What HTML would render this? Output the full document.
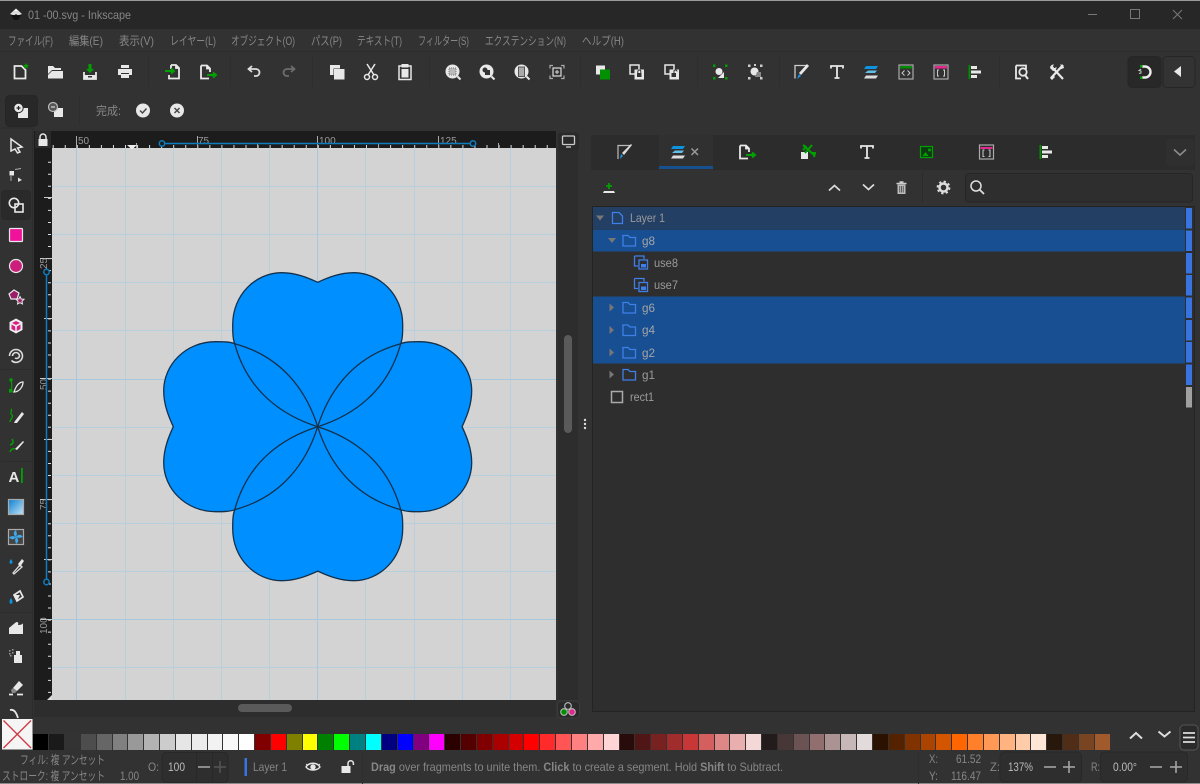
<!DOCTYPE html>
<html><head><meta charset="utf-8"><title>01 -00.svg - Inkscape</title>
<style>
html,body{margin:0;padding:0;background:#323232;width:1200px;height:784px;overflow:hidden}
svg{position:absolute;left:0;top:0}
text{font-family:"Liberation Sans","Noto Sans CJK JP",sans-serif;font-size:12px;fill:#868686}
#pal{position:absolute;left:33.3px;top:734px;height:16px;display:flex}
#pal i{display:block;width:15.85px;height:16px;box-sizing:border-box;border-right:1px solid #333}
.w{fill:#e8e8e8}.s{fill:none;stroke:#e8e8e8;stroke-width:1.8}.g{fill:#00a000}.gs{fill:none;stroke:#00a000;stroke-width:1.6}
</style></head><body>
<svg width="1200" height="784" viewBox="0 0 1200 784">
<defs>
<path id="h" d="M0 0C35-11 70-35 83-83C85-88 85-95 85-102C85-132 62-154 36-154C22-154 10-149 0-144.4C-10-149-22-154-36-154C-62-154-85-132-85-102C-85-95-85-88-83-83C-70-35-35-11 0 0Z"/>
<linearGradient id="gr" x1="0" y1="0" x2="1" y2="1"><stop offset="0" stop-color="#0a7fd0"/><stop offset="1" stop-color="#c5e4f5"/></linearGradient>
</defs>
<!-- chrome -->
<rect width="1200" height="784" fill="#323232"/>
<rect y="0" width="1200" height="29" fill="#272727"/>
<rect y="0" width="1200" height="1" fill="#9a9a9a"/>
<rect y="51" width="1200" height="1" fill="#2b2b2b"/>
<rect y="783" width="1200" height="1" fill="#8a8a8a"/>
<!-- title -->
<g transform="translate(16,14)"><path d="M-6 0L0-5.5 6 0 2 1.5 0 0-2 1.5Z" fill="#ddd"/><path d="M-5 1L5 1 2 6-2 6Z" fill="#111"/><path d="M-2-3L0-5 2-3Z" fill="#fff"/></g>
<text x="28" y="19" textLength="103" lengthAdjust="spacingAndGlyphs">01 -00.svg - Inkscape</text>
<path d="M1088 14.5H1097" stroke="#777" stroke-width="1"/>
<rect x="1130.5" y="9.5" width="9" height="9" fill="none" stroke="#777"/>
<path d="M1173 10L1182 19M1182 10L1173 19" stroke="#777"/>
<!-- menu -->
<g>
<text x="8" y="45" textLength="45" lengthAdjust="spacingAndGlyphs">ファイル(F)</text>
<text x="69" y="45" textLength="34" lengthAdjust="spacingAndGlyphs">編集(E)</text>
<text x="119" y="45" textLength="35" lengthAdjust="spacingAndGlyphs">表示(V)</text>
<text x="170" y="45" textLength="46" lengthAdjust="spacingAndGlyphs">レイヤー(L)</text>
<text x="231" y="45" textLength="64" lengthAdjust="spacingAndGlyphs">オブジェクト(O)</text>
<text x="311" y="45" textLength="31" lengthAdjust="spacingAndGlyphs">パス(P)</text>
<text x="357" y="45" textLength="45" lengthAdjust="spacingAndGlyphs">テキスト(T)</text>
<text x="418" y="45" textLength="51" lengthAdjust="spacingAndGlyphs">フィルター(S)</text>
<text x="485" y="45" textLength="81" lengthAdjust="spacingAndGlyphs">エクステンション(N)</text>
<text x="582" y="45" textLength="42" lengthAdjust="spacingAndGlyphs">ヘルプ(H)</text>
</g>
<!-- toolbar separators -->
<path d="M148.5 56V87M230.5 56V87M312.5 56V87M429.5 56V87M580.5 56V87M697.5 56V87M779.5 56V87M999.5 56V87M79.5 95V125" stroke="#2e2e2e"/>
<!-- toolbar icons -->
<g transform="translate(20,72)"><path d="M-5.5-6H1.5L5.5-2V6.5H-5.5Z" class="s"/><path d="M6-9L7-7 9-7 7.5-5.5 8-3.500 6-4.500 4-3.500 4.500-5.500 3-7 5-7Z" class="g"/></g>
<g transform="translate(55,72)"><path d="M-7-6H-2L0-4H6V-2H-3L-7 2Z" class="w"/><path d="M-7 6.5V3L-3-1H8V6.5Z" class="w"/></g>
<g transform="translate(90,72)"><path d="M-1.5-8H1.5V-3H4L0 1-4-3H-1.5Z" class="g"/><path d="M-6 0V7H6V0" class="s"/><rect x="-6" y="3" width="12" height="4" class="w"/><rect x="-2" y="4" width="4" height="1.5" fill="#333"/></g>
<g transform="translate(125,72)"><rect x="-4" y="-7" width="8" height="3" class="w"/><path d="M-7-3H7V3H4V1H-4V3H-7Z" class="w"/><rect x="-4" y="2" width="8" height="4" class="w"/></g>
<g transform="translate(173,72)"><path d="M-2-7H3L6-4V6.5H-4V3M-2-7V-3M3-7V-4H6" class="s"/><path d="M-8-1H1M-2-3.500L1-1-2 1.500" stroke="#00a000" stroke-width="2" fill="none"/></g>
<g transform="translate(207,72)"><path d="M-6-6.5H0L3-3.500V0M-6-6.5V6.5H2M0-6.5V-3.500H3" class="s"/><path d="M0 3H9M6 .5L9 3 6 5.5" stroke="#00a000" stroke-width="2" fill="none"/></g>
<g transform="translate(254,72)"><path d="M-5-3H2A3.500 3.500 0 0 1 2 4H0M-2-6L-5.5-3-2 0" fill="none" stroke="#dedede" stroke-width="1.8"/></g>
<g transform="translate(289,72)"><path d="M5-3H-2A3.500 3.500 0 0 0-2 4H0M2-6L5.5-3 2 0" fill="none" stroke="#6d6d6d" stroke-width="1.8"/></g>
<g transform="translate(337,72)"><rect x="-7" y="-7" width="10" height="10" class="w"/><rect x="-3.5" y="-3.5" width="11" height="11" fill="#333"/><rect x="-3" y="-3" width="10.5" height="10.5" class="w"/></g>
<g transform="translate(371,72)"><circle cx="-4" cy="5" r="2.5" fill="none" stroke="#e8e8e8" stroke-width="1.5"/><circle cx="4" cy="5" r="2.5" fill="none" stroke="#e8e8e8" stroke-width="1.5"/><path d="M-3 3L4-8M3 3L-4-8" fill="none" stroke="#e8e8e8" stroke-width="1.5"/></g>
<g transform="translate(405,72)"><rect x="-6" y="-6" width="12" height="13.5" fill="none" stroke="#e8e8e8" stroke-width="1.5"/><rect x="-3.5" y="-8" width="7" height="3.5" class="w"/><rect x="-3.5" y="-3" width="7" height="8.5" class="w"/></g>
<g transform="translate(453,72)"><circle cx="-.5" cy="-.5" r="7" class="w"/><rect x="-4" y="-4" width="7" height="7" fill="#bbb" stroke="#777" stroke-dasharray="1 1"/><path d="M4.5 4.5L7.5 7.5" stroke="#e8e8e8" stroke-width="2"/></g>
<g transform="translate(487,72)"><circle cx="-.5" cy="-.5" r="7" class="w"/><circle cx="-2" cy="-2" r="2.5" fill="#333"/><rect x="-2" y="-2" width="5" height="5" fill="#333"/><path d="M4.5 4.5L7.5 7.5" stroke="#e8e8e8" stroke-width="2"/></g>
<g transform="translate(522,72)"><circle cx="-.5" cy="-.5" r="7" class="w"/><rect x="-3.5" y="-5" width="6" height="9.5" fill="#aaa" stroke="#555"/><path d="M4.5 4.5L7.5 7.5" stroke="#e8e8e8" stroke-width="2"/></g>
<g transform="translate(557,72)" fill="none" stroke="#aaa"><path d="M-7-3.500V-6.5H-4M4-6.5H7V-3.500M7 3.500V6.5H4M-4 6.5H-7V3.500" stroke-width="1.2"/><rect x="-4" y="-4" width="8" height="8" stroke="#ddd" stroke-width="1.2"/><path d="M-2 0H2M0-2V2" stroke="#ddd"/></g>
<g transform="translate(603,72)"><rect x="-7" y="-6.5" width="9" height="9" class="w"/><rect x="-3" y="-2.500" width="10" height="10" fill="#009000"/></g>
<g transform="translate(637,72)"><rect x="-7" y="-7" width="9" height="9" fill="none" stroke="#e8e8e8" stroke-width="1.5"/><rect x="-2.500" y="-2.500" width="9.5" height="10" fill="#e8e8e8"/><rect x="0" y="1" width="4.5" height="4" fill="#333"/><path d="M.8 1V-.5A1.5 1.5 0 0 1 3.800-.5V1" stroke="#333" fill="none"/></g>
<g transform="translate(672,72)"><rect x="-7" y="-7" width="9" height="9" fill="none" stroke="#e8e8e8" stroke-width="1.5"/><rect x="-2.500" y="-2.500" width="9.5" height="10" fill="#e8e8e8"/><rect x="-.5" y="1" width="4.5" height="4" fill="#333"/><path d="M2 1V-.5A1.5 1.5 0 0 1 5-.5" stroke="#333" fill="none"/></g>
<g transform="translate(720,72)"><path d="M-7-7.5h2.500v2.500h-2.500zM5-7.5h2.500v2.500h-2.500zM-7 5h2.500v2.500h-2.500zM5 5h2.500v2.500h-2.500z" class="g"/><circle cx="-1" cy="-.5" r="3.500" class="w"/><path d="M-2 6L4 6 4 0Z" class="w"/></g>
<g transform="translate(755,72)"><path d="M-7-7.5h2.500v2.500h-2.500zM5-7.5h2.500v2.500h-2.500zM-7 5h2.500v2.500h-2.500zM5 5h2.500v2.500h-2.500zM-1-8h2v2h-2z" fill="#ccc"/><circle cx="-.5" cy="-.5" r="4" class="w"/><path d="M2 0H6V5H0Z" fill="#888"/></g>
<g transform="translate(801,72)"><path d="M-6 6.5V-6.5H6" fill="none" stroke="#ccc" stroke-width="1.3"/><path d="M6-8L8-6 0 3-2 1Z" class="w"/><path d="M-2 2L0 4-4 7Z" fill="#1b9ae8"/></g>
<path transform="translate(837,72)" d="M-6-3.500V-6H6V-3.500M0-6V6M-2.500 6H2.500" fill="none" stroke="#e8e8e8" stroke-width="1.8"/>
<g transform="translate(871,72)"><path d="M-5-6H7L5-3H-7Z" fill="#0e93e0"/><path d="M-3-1.500H6L4 1H-6Z" fill="#62bde8"/><path d="M-5 3.500H7L5 6.5H-7Z" fill="#ddd"/></g>
<g transform="translate(906,72)"><rect x="-7" y="-7" width="14" height="14" fill="none" stroke="#aaa" stroke-width="1.2"/><rect x="-6" y="-6" width="12" height="2.5" fill="#008a00"/><path d="M-1.5-1.5L-4 1-1.5 3.500M1.5-1.5L4 1 1.5 3.500" fill="none" stroke="#ccc"/></g>
<g transform="translate(941,72)"><rect x="-7" y="-7" width="14" height="14" fill="none" stroke="#aaa" stroke-width="1.2"/><rect x="-6" y="-6" width="12" height="2.5" fill="#e6268f"/><path d="M-2-2H-3.500V4H-2M2-2H3.500V4H2" fill="none" stroke="#ccc"/></g>
<g transform="translate(975,72)"><rect x="-6.5" y="-7" width="1.8" height="14" fill="#009000"/><rect x="-4" y="-6" width="6" height="3" class="w"/><rect x="-4" y="-1.5" width="10" height="3" class="w"/><rect x="-4" y="3" width="6" height="3" class="w"/></g>
<g transform="translate(1022,72)"><path d="M-6-6.5H4V-3M-6-6.5V6.5H-1" class="s"/><circle cx="1" cy="0" r="3.700" class="s"/><path d="M3 3L6 7" stroke="#e8e8e8" stroke-width="2"/></g>
<g transform="translate(1057,72)"><path d="M-6-6L6 7M6-7L-6 6" stroke="#e8e8e8" stroke-width="2.2"/><path d="M-7-4A3.500 3.500 0 0 1-3-7.5L-4.500-5-3-3.500-.5-5A3.500 3.500 0 0 1-4-1ZM7-4A3.500 3.500 0 0 0 3-7.5L5-5 2-2ZM-7 6L-4 3-2 5-5 8Z" class="w"/></g>
<rect x="1128" y="56.5" width="33" height="31" rx="4" fill="#282828" stroke="#262626"/>
<rect x="1163" y="56.5" width="32" height="31" rx="4" fill="#333" stroke="#262626"/>
<g transform="translate(1145,72)"><path d="M-5-5.5H-2A5.5 5.5 0 0 1-2 5.5H-5" fill="none" stroke="#eee" stroke-width="2.4" transform="translate(2,0)"/><rect x="-5" y="-7" width="2.5" height="2.5" fill="#00a000"/><rect x="-5" y="4.5" width="2.5" height="2.5" fill="#00a000"/><path d="M-4-3L-6-1.5-4-1-4 1-6 1.5" stroke="#ccc" fill="none"/></g>
<path d="M1174 71.5L1181 66V77Z" fill="#e8e8e8"/>
<!-- row2 -->
<rect x="5.5" y="95.5" width="32" height="31" rx="4" fill="#282828" stroke="#262626"/>
<g transform="translate(20,110)"><rect x="-2" y="-2" width="10" height="10" class="w"/><circle cx="-1.5" cy="-2" r="4.700" class="w" stroke="#282828"/><path d="M-3.500-2H.5M-1.5-4V0" stroke="#222" stroke-width="1.2"/></g>
<g transform="translate(56,110)"><rect x="-2" y="-2" width="9" height="9" class="w"/><circle cx="-3" cy="-3" r="4.5" fill="#555" stroke="#bbb" stroke-width="1.2"/><path d="M-5-3H-1" stroke="#ddd" stroke-width="1.2"/></g>
<text x="96" y="115" textLength="25" lengthAdjust="spacingAndGlyphs">完成:</text>
<circle cx="143" cy="110.5" r="7" fill="#e8e8e8"/><path d="M140 110.5L142.500 113 146.500 108.5" fill="none" stroke="#444" stroke-width="1.4"/>
<circle cx="177" cy="110.5" r="7" fill="#e8e8e8"/><path d="M174.500 108L179.500 113M179.500 108L174.500 113" stroke="#444" stroke-width="1.4"/>
<!-- left toolbar -->
<rect x="1.5" y="190.5" width="29" height="29" rx="4" fill="#2a2a2a" stroke="#282828"/>
<path d="M1 128H32M32.500 128V718M1 369.5H32M1 461.5H32M1 612.500H32" stroke="#2c2c2c"/>
<g transform="translate(16,146)"><path d="M-5-7L6 1 1.5 2 4 6 1.5 7 -1 3-5 5Z" fill="#333" stroke="#e8e8e8" stroke-width="1.5"/></g>
<g transform="translate(16,175)"><rect x="-6.5" y="-4" width="4.5" height="4.5" class="w"/><path d="M-1-5.5L5-6.5" stroke="#aaa" fill="none"/><path d="M-5 1V6" stroke="#aaa"/><path d="M2 2.500L6 5 2 7Z" fill="#ddd"/></g>
<g transform="translate(16,205)"><circle cx="-2" cy="-2" r="4.700" fill="none" stroke="#e8e8e8" stroke-width="1.6"/><rect x="-1" y="-1" width="8" height="8" fill="none" stroke="#e8e8e8" stroke-width="1.6"/></g>
<g transform="translate(16,235)"><rect x="-6.5" y="-6.5" width="13" height="13" rx="1" fill="#f0129b" stroke="#e8e8e8" stroke-width="1.2"/></g>
<circle cx="16" cy="266" r="6.5" fill="#cc1f7c" stroke="#e8e8e8" stroke-width="1.2"/>
<g transform="translate(16,296)"><path d="M-7-2L-2-6 3-3 1 3-5 3Z" fill="#9c1e6a" stroke="#e8e8e8" stroke-width="1.2"/><path d="M4 .5L5.200 3 8 3.300 6 5.200 6.5 8 4 6.700 1.5 8 2 5.200 0 3.300 2.800 3Z" fill="#9c1e6a" stroke="#e8e8e8"/></g>
<g transform="translate(16,326)"><path d="M0-7.5L6.5-4V4L0 7.5-6.5 4V-4Z" fill="#eee"/><path d="M0-5L4-3 0-1-4-3ZM-4.500-1.5L-.8 .5V5L-4.500 3ZM4.500-1.5L.8 .5V5L4.500 3Z" fill="#d81c82"/></g>
<g transform="translate(16,356)" fill="none" stroke="#ddd" stroke-width="1.6"><path d="M-6.5 0A6.5 6.5 0 0 1 6.5 0 6.5 6.5 0 0 1-4.500 4.500"/><path d="M-3.500 0A3.500 3.500 0 0 1 3.500 0 3 3 0 0 1-1 2"/></g>
<g transform="translate(16,386)"><path d="M-5-6C-4-2-4 0-5 5" fill="none" stroke="#00a000" stroke-width="1.2"/><circle cx="-5" cy="-6" r="1.7" class="g"/><rect x="-7" y="3" width="3.500" height="3.500" class="g"/><path d="M-2 6C0 0 3-4 7-4C7 1 3 6-2 6Z" fill="none" stroke="#e8e8e8" stroke-width="1.3"/></g>
<g transform="translate(16,416)"><path d="M-5-7C-3-5-7-3-4-1C-2 1-6 3-6 6" fill="none" stroke="#00a000" stroke-width="1.3"/><path d="M-1 5L6-4 8-2 1 7-2 7Z" class="w"/></g>
<g transform="translate(16,446)"><path d="M-4-7C-2-4-3-2-6-1M-6 6C-5 3-3 2-1 3" fill="none" stroke="#00a000" stroke-width="1.5"/><path d="M-1 3L7-5 8-4 1 4Z" class="w"/></g>
<text x="8.5" y="482" style="font-size:15px;font-weight:bold;fill:#e8e8e8">A</text><rect x="21" y="468" width="1.8" height="15" fill="#00a000"/>
<g transform="translate(16,507)"><rect x="-7.5" y="-7.5" width="15" height="15" fill="url(#gr)" stroke="#aaa" stroke-width="1.2"/></g>
<g transform="translate(16,537)"><rect x="-7.5" y="-7.5" width="15" height="15" fill="#444" stroke="#aaa" stroke-width="1.2"/><path d="M0 0C-3-2-3-5 0-7L1-3ZM0 0C2-3 5-3 7 0L3 1ZM0 0C3 2 3 5 0 7L-1 3ZM0 0C-2 3-5 3-7 0L-3-1Z" fill="#3ea9e8"/></g>
<g transform="translate(16,567)"><path d="M-5-8C-3-5-3-4-5-3-7-4-7-5-5-8Z" fill="#0e93e0"/><path d="M-3 6L4-2 6 0-2 7Z" fill="none" stroke="#ddd" stroke-width="1.3"/><path d="M2-3L6-8 8-6 4 0Z" class="w"/></g>
<g transform="translate(16,597)"><path d="M-2-2L4-6 7 0 1 4Z" fill="none" stroke="#e8e8e8" stroke-width="1.7"/><path d="M-2-2L4-2 1 4Z" class="w"/><path d="M-5 1C-3 4-3 6-5 7-7 6-7 4-5 1Z" fill="#0e93e0"/></g>
<g transform="translate(16,627)"><path d="M-7 7V1L-1-4C1-6 3-5 2-2 5-2 7-3 7-4V7Z" class="w"/></g>
<g transform="translate(16,656)"><rect x="-2" y="-1" width="8" height="8" class="w"/><rect x="0" y="-5" width="4" height="4" class="w"/><path d="M-7-6h1.5v1.5h-1.5zM-4-7h1.5v1.5h-1.5zM-7-3h1.5v1.5h-1.5zM-4-4h1.5v1.5h-1.5zM-6-1h1.5v1.5h-1.5z" fill="#999"/></g>
<g transform="translate(16,687)"><path d="M-3 1L3-6 7-2 1 4Z" class="w"/><path d="M-5 3L-3 1 1 4-1 6H-4Z" fill="#888"/><path d="M-7 7.5H-3M1 7.5H7" class="s"/></g>
<path d="M10 710C14 709 16 712 18 718" fill="none" stroke="#e8e8e8" stroke-width="1.8"/>
<!-- canvas rulers -->
<rect x="34" y="131" width="522" height="17" fill="#1c1c1c"/>
<rect x="34" y="131" width="18" height="569" fill="#1c1c1c"/>
<rect x="35" y="131" width="16" height="17" fill="#2a2a2a"/>
<g transform="translate(43,140)"><rect x="-4.500" y="-1" width="9" height="7" fill="#e8e8e8"/><path d="M-3-1V-3A3 3 0 0 1 3-3V-1" fill="none" stroke="#e8e8e8" stroke-width="1.5"/></g>
<!-- canvas -->
<rect x="52" y="148" width="504" height="552" fill="#d3d3d3"/>
<g stroke="#b8cfde" stroke-width="1" fill="none">
<path d="M125.5 148V700M173.5 148V700M221.5 148V700M269.5 148V700M365.5 148V700M414.5 148V700M462.5 148V700M510.5 148V700"/>
<path d="M52 186.5H556M52 234.5H556M52 282.500H556M52 330.500H556M52 427.500H556M52 475.500H556M52 523.500H556M52 571.500H556M52 667.500H556"/>
</g>
<g stroke="#a8c8de" stroke-width="1" fill="none"><path d="M76.5 148V700M317.5 148V700M52 379.5H556M52 619.5H556"/></g>
<!-- clover -->
<g transform="translate(317.7,426.7)">
<use href="#h" fill="#008fff"/><use href="#h" fill="#008fff" transform="rotate(90)"/><use href="#h" fill="#008fff" transform="rotate(180)"/><use href="#h" fill="#008fff" transform="rotate(270)"/>
<g fill="none" stroke="#14304a" stroke-width="1.3"><use href="#h"/><use href="#h" transform="rotate(90)"/><use href="#h" transform="rotate(180)"/><use href="#h" transform="rotate(270)"/></g>
</g>
<!-- ruler ticks -->
<line x1="52.7" x2="556" y1="146.5" y2="146.5" stroke="#ddd" stroke-width="3" stroke-dasharray="1 11.05"/>
<line x1="49.5" x2="49.5" y1="161.7" y2="700" stroke="#ddd" stroke-width="3" stroke-dasharray="1 11.05"/>
<path d="M76.5 136V148M197.5 136V148M317.5 136V148M438.5 136V148M136.5 143V148M257.5 143V148M378.5 143V148M498.5 143V148" stroke="#aaa"/>
<path d="M40 258.5H52M40 378.5H52M40 499.5H52M40 619.5H52M44 197.5H52M44 318.5H52M44 439.5H52M44 559.5H52" stroke="#ccc"/>
<text x="78" y="144" style="font-size:10px;fill:#999">50</text><text x="198" y="144" style="font-size:10px;fill:#999">75</text><text x="319" y="144" style="font-size:10px;fill:#999">100</text><text x="440" y="144" style="font-size:10px;fill:#999">125</text>
<text transform="translate(47,269) rotate(-90)" style="font-size:10px;fill:#999">25</text>
<text transform="translate(47,390) rotate(-90)" style="font-size:10px;fill:#999">50</text>
<text transform="translate(47,510) rotate(-90)" style="font-size:10px;fill:#999">75</text>
<text transform="translate(47,634) rotate(-90)" style="font-size:10px;fill:#999">100</text>
<path d="M127 145H137L132 149.5Z" fill="#eee"/>
<path d="M162 143.5H473" stroke="#0f7cc0" stroke-width="1.5"/><circle cx="162" cy="143.5" r="2.700" fill="#1c1c1c" stroke="#0f7cc0" stroke-width="1.5"/><circle cx="473" cy="143.5" r="2.700" fill="#1c1c1c" stroke="#0f7cc0" stroke-width="1.5"/>
<path d="M46.5 272V582" stroke="#0f7cc0" stroke-width="1.5"/><circle cx="46.5" cy="272" r="2.700" fill="#1c1c1c" stroke="#0f7cc0" stroke-width="1.5"/><circle cx="46.5" cy="582" r="2.700" fill="#1c1c1c" stroke="#0f7cc0" stroke-width="1.5"/>
<path d="M47 700L52 695V700Z" fill="#ddd"/>
<!-- scrollbars -->
<rect x="34" y="700" width="522" height="17" fill="#2d2d2d"/>
<rect x="238" y="704" width="54" height="8" rx="4" fill="#5a5a5a"/>
<rect x="558" y="148" width="20" height="552" fill="#2d2d2d"/>
<rect x="564" y="335" width="8" height="98" rx="4" fill="#5a5a5a"/>
<rect x="558" y="132.5" width="21" height="18" rx="3" fill="#2a2a2a"/>
<g fill="none" stroke="#ccc" stroke-width="1.3"><rect x="562.5" y="136" width="12" height="8.5" rx="1"/><path d="M566 147H571"/></g>
<rect x="557.5" y="701" width="22" height="17" rx="4" fill="#2a2a2a" stroke="#3c3c3c"/>
<g fill="none" stroke="#bbb" stroke-width="1.1"><circle cx="568" cy="706" r="3.300"/><circle cx="564" cy="712" r="3.300" fill="#009000"/><circle cx="572" cy="712" r="3.300" fill="#e6268f"/></g>
<circle cx="585" cy="420" r="1.2" fill="#ddd"/><circle cx="585" cy="424" r="1.2" fill="#ddd"/><circle cx="585" cy="428" r="1.2" fill="#ddd"/>
<!-- panel -->
<rect x="591" y="135" width="604" height="35" fill="#2c2c2c"/>
<rect x="659" y="135" width="54" height="35" fill="#303030"/>
<rect x="659" y="166" width="54" height="3" fill="#16508f"/>
<rect x="1166" y="139" width="28" height="27" rx="3" fill="#2f2f2f"/>
<path d="M1174 149.5L1180 155 1186 149.5" fill="none" stroke="#8c8c8c" stroke-width="1.6"/>
<g transform="translate(624,152)"><path d="M-6 7V-6.5H6" fill="none" stroke="#bbb" stroke-width="1.2"/><path d="M7-8L8-7 0 3-2 1Z" fill="#ddd"/><path d="M-3 2L-1 4-4 7Z" fill="#1b9ae8"/></g>
<g transform="translate(678,152)"><path d="M-5-6H7L5-3H-7Z" fill="#0e93e0"/><path d="M-3-1.5H6L4 1H-6Z" fill="#62bde8"/><path d="M-5 3.500H7L5 6.5H-7Z" fill="#ddd"/></g>
<path d="M691.5 148.5L698 155M698 148.5L691.5 155" stroke="#999" stroke-width="1.5"/>
<g transform="translate(746,152)"><path d="M-6-6.5H0L3-3.500V0M-6-6.5V6.5H2M0-6.5V-3.500H3" class="s"/><path d="M0 3H9M6 .5L9 3 6 5.5" stroke="#00a000" stroke-width="2" fill="none"/></g>
<g transform="translate(807,152)"><rect x="-6" y="0" width="7" height="7" class="w"/><path d="M-3-6L7 3M5-7L-2 1M-4-7L-1-5-4-2M4 1L8 1 7 5" stroke="#00a000" stroke-width="2" fill="none"/></g>
<path transform="translate(867,152)" d="M-6-3.500V-6H6V-3.500M0-6V6M-2.500 6H2.500" fill="none" stroke="#e8e8e8" stroke-width="1.8"/>
<g transform="translate(926.5,152)"><rect x="-6" y="-5.5" width="12" height="11" fill="#0d3a10" stroke="#00a000" stroke-width="1.2"/><path d="M-4 4L-1 0 2 4Z" class="g"/><circle cx="3" cy="-2" r="1.5" class="g"/></g>
<g transform="translate(986.5,152)"><rect x="-7" y="-7" width="14" height="14" fill="none" stroke="#aaa" stroke-width="1.2"/><rect x="-6" y="-5" width="12" height="2" fill="#e6268f"/><path d="M-2-2H-3.500V4.500H-2M2-2H3.500V4.500H2" fill="none" stroke="#ccc"/></g>
<g transform="translate(1046,152)"><rect x="-6.5" y="-7" width="1.8" height="14" fill="#009000"/><rect x="-4" y="-6" width="6" height="3" class="w"/><rect x="-4" y="-1.5" width="10" height="3" class="w"/><rect x="-4" y="3" width="6" height="3" class="w"/></g>
<!-- panel toolbar -->
<g transform="translate(609,187)"><path d="M-6 6H6L5 4H-5Z" fill="#e8e8e8"/><path d="M-3-1H3M0-4V2" stroke="#00a000" stroke-width="1.8"/></g>
<path d="M829 190.5L834.5 185.5 840 190.5M863 184.5L868.5 189.5 874 184.5" fill="none" stroke="#ddd" stroke-width="1.7"/>
<g transform="translate(901.5,187.5)"><path d="M-5-4H5M-2-5.5H2" stroke="#ccc" stroke-width="1.5"/><path d="M-4-3H4V6.5H-4Z" fill="#bbb"/><path d="M-1.7-1.5V5M0-1.5V5M1.7-1.5V5" stroke="#333" stroke-width=".7"/></g>
<path d="M922.5 173V202" stroke="#2a2a2a"/>
<g transform="translate(943.5,187.5)"><circle r="4" fill="none" stroke="#ddd" stroke-width="2.5"/><circle r="6" fill="none" stroke="#ddd" stroke-width="1.8" stroke-dasharray="2.300 2.400"/></g>
<rect x="965.5" y="173.5" width="227" height="28.5" rx="3" fill="#2e2e2e" stroke="#262626"/>
<g transform="translate(977,187)" fill="none" stroke="#ddd" stroke-width="1.5"><circle cx="-1" cy="-1" r="5"/><path d="M2.500 2.500L7 7" stroke-width="1.8"/></g>
<!-- tree -->
<rect x="592.5" y="206.5" width="602" height="505" fill="#2e2e2e" stroke="#232323"/>
<rect x="593" y="207" width="592" height="22" fill="#233f63"/>
<rect x="593" y="229.5" width="592" height="22" fill="#174f92"/>
<rect x="593" y="296.5" width="592" height="67" fill="#174f92"/>
<rect x="1186" y="208" width="6" height="20.5" fill="#3874e0"/>
<rect x="1186" y="230.5" width="6" height="20.5" fill="#3874e0"/>
<rect x="1186" y="253" width="6" height="20.5" fill="#3874e0"/>
<rect x="1186" y="275" width="6" height="20.5" fill="#3874e0"/>
<rect x="1186" y="297.5" width="6" height="20.5" fill="#3874e0"/>
<rect x="1186" y="320" width="6" height="20.5" fill="#3874e0"/>
<rect x="1186" y="342" width="6" height="20.5" fill="#3874e0"/>
<rect x="1186" y="364.5" width="6" height="20.5" fill="#3874e0"/>
<rect x="1186" y="387" width="6" height="20.5" fill="#a0a0a0"/>
<path d="M596 215.5H604L600 220.5Z" fill="#777"/>
<path d="M608 238H616L612 243Z" fill="#777"/>
<path d="M609.5 303.5V311.5L614 307.5ZM609.5 326V334L614 330ZM609.5 348.5V356.5L614 352.5ZM609.5 370.5V378.5L614 374.5Z" fill="#777"/>
<g fill="none" stroke="#3f7fe8" stroke-width="1.3">
<path d="M612.5 212.5H619L622.5 216V223.5H612.5Z"/>
<path d="M623 235.5H628L630 237.5H635.5V246H623Z"/>
<path d="M623 302.5H628L630 304.5H635.5V313H623Z"/>
<path d="M623 325H628L630 327H635.5V335.5H623Z"/>
<path d="M623 347.5H628L630 349.5H635.5V358H623Z"/>
<path d="M623 369.5H628L630 371.5H635.5V380H623Z"/>
<path d="M634.5 256V266H638M634.5 256H644V259"/><rect x="639" y="260" width="8.5" height="9"/>
<path d="M634.5 278.5V288.5H638M634.5 278.5H644V281.5"/><rect x="639" y="282.5" width="8.5" height="9"/>
</g>
<rect x="641" y="264" width="5" height="3.500" fill="#3f7fe8"/><rect x="641" y="286.5" width="5" height="3.500" fill="#3f7fe8"/>
<rect x="611.5" y="391.5" width="11" height="11" fill="none" stroke="#aaa" stroke-width="1.5"/>
<text x="630" y="222" textLength="35" lengthAdjust="spacingAndGlyphs" style="fill:#9b9b9b">Layer 1</text>
<text x="642" y="245" textLength="13" lengthAdjust="spacingAndGlyphs" style="fill:#a5a5a5">g8</text>
<text x="654" y="267" textLength="24" lengthAdjust="spacingAndGlyphs" style="fill:#9b9b9b">use8</text>
<text x="654" y="289" textLength="24" lengthAdjust="spacingAndGlyphs" style="fill:#9b9b9b">use7</text>
<text x="642" y="312" textLength="13" lengthAdjust="spacingAndGlyphs" style="fill:#a5a5a5">g6</text>
<text x="642" y="334" textLength="13" lengthAdjust="spacingAndGlyphs" style="fill:#a5a5a5">g4</text>
<text x="642" y="357" textLength="13" lengthAdjust="spacingAndGlyphs" style="fill:#a5a5a5">g2</text>
<text x="642" y="379" textLength="13" lengthAdjust="spacingAndGlyphs" style="fill:#9b9b9b">g1</text>
<text x="630" y="401" textLength="24" lengthAdjust="spacingAndGlyphs" style="fill:#9b9b9b">rect1</text>
<!-- palette extras -->
<rect x="2" y="719" width="30.5" height="30.5" fill="#f5f5f5"/>
<path d="M3.500 720.5L31 748M31 720.5L3.500 748" stroke="#cf3a45" stroke-width="1.4"/>
<path d="M1130 738.5L1136 733 1142 738.5M1158.5 731.5L1164.5 736.5 1170.5 731.5" fill="none" stroke="#ddd" stroke-width="2"/>
<rect x="1180" y="725" width="18" height="25" rx="4" fill="#2a2a2a" stroke="#555"/>
<path d="M1183 733H1195M1183 737.5H1195M1183 742H1195" stroke="#ddd" stroke-width="1.8"/>
<!-- status -->
<text x="20" y="764" textLength="85" lengthAdjust="spacingAndGlyphs">フィル: 複 アンセット</text>
<text x="2" y="780" textLength="103" lengthAdjust="spacingAndGlyphs">ストローク: 複 アンセット</text>
<text x="120" y="780" textLength="19" lengthAdjust="spacingAndGlyphs">1.00</text>
<text x="148" y="771" textLength="11" lengthAdjust="spacingAndGlyphs">O:</text>
<rect x="162" y="752.5" width="66" height="30" rx="4" fill="#2e2e2e" stroke="#282828"/>
<text x="168" y="771" textLength="17" lengthAdjust="spacingAndGlyphs" style="fill:#bbb">100</text>
<path d="M198 767H210" stroke="#aaa" stroke-width="1.5"/><path d="M214 767H226M220 761V773" stroke="#555" stroke-width="1.5"/>
<path d="M196.5 753V782M212.5 753V782" stroke="#282828"/>
<rect x="244.5" y="758" width="2.5" height="18" fill="#3874e0"/>
<text x="253" y="771" textLength="34" lengthAdjust="spacingAndGlyphs">Layer 1</text>
<g transform="translate(313,767)"><path d="M-7 0C-4-5 4-5 7 0 4 4-4 4-7 0Z" fill="none" stroke="#e8e8e8" stroke-width="1.4"/><circle r="2.7" fill="#e8e8e8"/><path d="M-7-3L-5-1.5M7-3L5-1.5" stroke="#e8e8e8"/></g>
<g transform="translate(347,767)"><rect x="-5.5" y="-1" width="9" height="7" fill="#e8e8e8"/><path d="M1-1V-3.500A2.700 2.700 0 0 1 6.400-3.500V-2" fill="none" stroke="#e8e8e8" stroke-width="1.5"/></g>
<path d="M362.5 752V784M918.5 752V784" stroke="#2e2e2e"/>
<text x="371" y="771" textLength="412" lengthAdjust="spacingAndGlyphs"><tspan style="font-weight:bold">Drag</tspan> over fragments to unite them. <tspan style="font-weight:bold">Click</tspan> to create a segment. Hold <tspan style="font-weight:bold">Shift</tspan> to Subtract.</text>
<text x="929" y="763" textLength="9" lengthAdjust="spacingAndGlyphs">X:</text>
<text x="929" y="780" textLength="9" lengthAdjust="spacingAndGlyphs">Y:</text>
<text x="956" y="763" textLength="25" lengthAdjust="spacingAndGlyphs">61.52</text>
<text x="951" y="780" textLength="30" lengthAdjust="spacingAndGlyphs">116.47</text>
<text x="990" y="771" textLength="10" lengthAdjust="spacingAndGlyphs">Z:</text>
<rect x="1000" y="752" width="81.5" height="30" rx="4" fill="#2e2e2e" stroke="#282828"/>
<text x="1008" y="771" textLength="25" lengthAdjust="spacingAndGlyphs" style="fill:#bbb">137%</text>
<path d="M1044 767H1056M1063 767H1075M1069 761V773" stroke="#aaa" stroke-width="1.5"/>
<text x="1091" y="771" textLength="9" lengthAdjust="spacingAndGlyphs">R:</text>
<rect x="1100.5" y="752" width="87" height="30" rx="4" fill="#2e2e2e" stroke="#282828"/>
<text x="1113" y="771" textLength="24" lengthAdjust="spacingAndGlyphs" style="fill:#bbb">0.00°</text>
<path d="M1150 767H1162M1170 767H1182M1176 761V773" stroke="#aaa" stroke-width="1.5"/>
</svg>
<div id="pal">
<i style="background:#000"></i><i style="background:#1a1a1a"></i><i style="background:#333"></i><i style="background:#4d4d4d"></i><i style="background:#666"></i><i style="background:#808080"></i><i style="background:#999"></i><i style="background:#b3b3b3"></i><i style="background:#ccc"></i><i style="background:#e6e6e6"></i><i style="background:#ececec"></i><i style="background:#f2f2f2"></i><i style="background:#f9f9f9"></i><i style="background:#fff"></i><i style="background:#800000"></i><i style="background:#f00"></i><i style="background:#808000"></i><i style="background:#ff0"></i><i style="background:#008000"></i><i style="background:#0f0"></i><i style="background:#008080"></i><i style="background:#0ff"></i><i style="background:#000080"></i><i style="background:#00f"></i><i style="background:#800080"></i><i style="background:#f0f"></i>
<i style="background:#2b0000"></i><i style="background:#500"></i><i style="background:#800000"></i><i style="background:#a00"></i><i style="background:#d40000"></i><i style="background:#f00"></i><i style="background:#ff2a2a"></i><i style="background:#f55"></i><i style="background:#ff8080"></i><i style="background:#faa"></i><i style="background:#ffd5d5"></i>
<i style="background:#280b0b"></i><i style="background:#501616"></i><i style="background:#782121"></i><i style="background:#a02c2c"></i><i style="background:#c83737"></i><i style="background:#d35f5f"></i><i style="background:#de8787"></i><i style="background:#e9afaf"></i><i style="background:#f4d7d7"></i>
<i style="background:#241c1c"></i><i style="background:#483737"></i><i style="background:#6c5353"></i><i style="background:#916f6f"></i><i style="background:#ac9393"></i><i style="background:#c8b7b7"></i><i style="background:#e3dbdb"></i>
<i style="background:#2b1100"></i><i style="background:#520"></i><i style="background:#803300"></i><i style="background:#a40"></i><i style="background:#d45500"></i><i style="background:#f60"></i><i style="background:#ff7f2a"></i><i style="background:#f95"></i><i style="background:#ffb380"></i><i style="background:#fca"></i><i style="background:#ffe6d5"></i>
<i style="background:#28170b"></i><i style="background:#502d16"></i><i style="background:#784421"></i><i style="background:#a05a2c"></i>
</div>
</body></html>
